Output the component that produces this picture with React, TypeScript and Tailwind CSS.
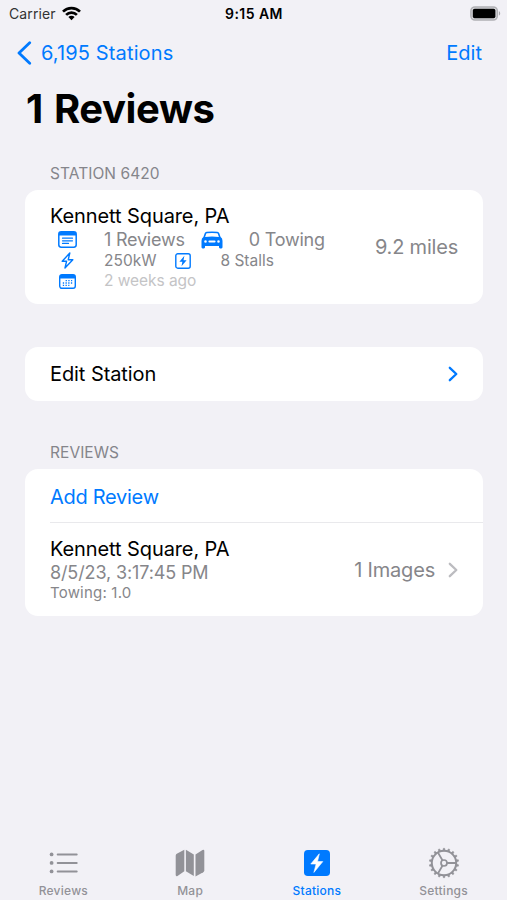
import React from 'react';

type IconProps = { className?: string };

const WifiIcon = () => (
  <svg width="19" height="15" viewBox="0 0 19 15" fill="none" stroke="#000" strokeWidth="2.7">
    <path d="M1 5.6a12.2 12.2 0 0 1 17 0" />
    <path d="M4.1 8.9a7.7 7.7 0 0 1 10.8 0" />
    <path d="M9.5 14.2 6.4 11.1a4.4 4.4 0 0 1 6.2 0Z" fill="#000" stroke="none" />
  </svg>
);

const BatteryIcon = () => (
  <svg width="31" height="15" viewBox="0 0 31 15">
    <rect x="0.9" y="0.9" width="26.4" height="13.2" rx="4" fill="#d8d8dc" stroke="#b0b0b4" strokeWidth="1.5" />
    <rect x="2.8" y="2.8" width="22.6" height="9.4" rx="1.8" fill="#000" />
    <path d="M28.9 5.2c1.7.6 1.7 3.8 0 4.4Z" fill="#a9a9ad" />
  </svg>
);

const Chevron = ({ className }: IconProps) => (
  <svg className={className} width="10" height="16" viewBox="0 0 10 16" fill="none" stroke="currentColor" strokeWidth="2.3" strokeLinecap="round" strokeLinejoin="round">
    <path d="M1.8 1.8 8.3 8l-6.5 6.2" />
  </svg>
);

const NoteIcon = () => (
  <svg width="19" height="17" viewBox="0 0 19 17" fill="none" stroke="currentColor">
    <rect x="0.8" y="0.8" width="17.4" height="15.4" rx="2.4" strokeWidth="1.5" />
    <path d="M1 3V2.6Q1 1 2.6 1h13.8Q18 1 18 2.6V4.6H1Z" fill="currentColor" stroke="none" />
    <path d="M4.5 7.2h10M4.5 9.8h10M4.5 12.4h6" strokeWidth="1.2" strokeLinecap="round" />
  </svg>
);

const CalendarIcon = () => (
  <svg width="17" height="15" viewBox="0 0 17 15" fill="none" stroke="currentColor">
    <rect x="0.7" y="0.7" width="15.6" height="13.6" rx="2.2" strokeWidth="1.4" />
    <path d="M1 4.4V2.2Q1 1 2.2 1h12.6Q16 1 16 2.2v2.2Z" fill="currentColor" stroke="none" />
    <path d="M6.6 6.6h6.6M3.8 9h9.4M3.8 11.4h6.6" strokeWidth="1.3" strokeDasharray="1.3 1.4" />
  </svg>
);

const BoltIcon = () => (
  <svg width="13" height="17" viewBox="0 0 13 17" fill="none" stroke="currentColor" strokeWidth="1.4" strokeLinejoin="round">
    <path d="M8.8 1 1.2 9.2h4.4L4 16l7.8-8.2H7.2Z" />
  </svg>
);

const BoltSquareIcon = () => (
  <svg width="16" height="16" viewBox="0 0 16 16" fill="none">
    <rect x="0.8" y="0.8" width="14.4" height="14.4" rx="2" stroke="currentColor" strokeWidth="1.4" />
    <path d="M9.4 2.8 4.4 8.7h3L6.5 13.2l5.1-5.9H8.5Z" fill="currentColor" />
  </svg>
);

const CarIcon = () => (
  <svg width="22" height="18" viewBox="0 0 22 18" fill="currentColor">
    <path
      fillRule="evenodd"
      d="M5.6.8Q11 .1 16.4.8q1.4.2 1.9 1.5l1.3 3.8q1.9 1.2 1.9 3.7v6.5q0 1.1-1.1 1.1h-1.3q-1.1 0-1.1-1.1v-1.4H4v1.4q0 1.1-1.1 1.1H1.6Q.5 17.4.5 16.3V9.8q0-2.5 1.9-3.7l1.3-3.8Q4.2 1 5.6.8ZM5.9 2.2q-.6.1-.8.7L4.1 5.9q6.9-.7 13.8 0l-1-3q-.2-.6-.8-.7-5.1-.6-10.2 0ZM4.5 9.2a1.3 1.3 0 1 0 0 2.6a1.3 1.3 0 1 0 0-2.6ZM17.5 9.2a1.3 1.3 0 1 0 0 2.6a1.3 1.3 0 1 0 0-2.6ZM8.4 9.5q-1 0-1 1t1 1h5.2q1 0 1-1t-1-1Z"
    />
  </svg>
);

const ListIcon = () => (
  <svg width="30" height="22" viewBox="0 0 30 22" stroke="currentColor" strokeLinecap="round" fill="currentColor">
    <path d="M9.7 2.4h19M9.7 10.9h19M9.7 19.4h19" strokeWidth="2" />
    <g stroke="none">
      <circle cx="3.6" cy="2.4" r="1.9" />
      <circle cx="3.6" cy="10.9" r="1.9" />
      <circle cx="3.6" cy="19.4" r="1.9" />
    </g>
  </svg>
);

const MapIcon = () => (
  <svg width="30" height="28" viewBox="0 0 30 28" fill="currentColor">
    <path d="M9.3.7V22.2L2.5 26.9Q.7 27.8.7 25.8V6.7Q.7 5.4 1.8 4.7Z" />
    <path d="m10.9.7 7.9 4.7v21.7l-7.9-4.9Z" />
    <path d="M20.5 5.5 27.5.9Q29.3.1 29.3 2v19.2q0 1.3-1.1 2l-7.7 4.4Z" />
  </svg>
);

const StationIcon = () => (
  <svg width="28" height="28" viewBox="0 0 28 28">
    <rect x="1" y="1" width="26" height="26" rx="3.8" fill="currentColor" />
    <path d="M16.3 4.8 7.8 15h5.3l-2.2 8.4 8.9-10.8h-5.3Z" fill="#fff" stroke="#fff" strokeWidth=".6" strokeLinejoin="round" />
  </svg>
);

const GearIcon = () => (
  <svg width="32" height="32" viewBox="0 0 32 32" fill="none" stroke="currentColor">
    <circle cx="16" cy="16" r="12.2" strokeWidth="2" />
    {[...Array(18)].map((_, i) => (
      <path key={i} d="M14.9 3.8l.4-2.5h1.4l.4 2.5Z" fill="currentColor" strokeWidth=".5" transform={`rotate(${i * 20} 16 16)`} />
    ))}
    <circle cx="16" cy="16" r="3" strokeWidth="1.7" />
    <path d="M19 16h9M14.5 13.4 10 5.6M14.5 18.6 10 26.4" strokeWidth="1.9" />
  </svg>
);

const Label = ({ icon, children }: { icon: React.ReactNode; children: React.ReactNode }) => (
  <div className="flex items-center gap-5">
    <span className="flex w-[34px] justify-center text-[#007aff]">{icon}</span>
    <span>{children}</span>
  </div>
);

const SectionHeader = ({ children }: { children: React.ReactNode }) => (
  <h2 className="px-[25px] text-[15.5px] leading-5 tracking-[0.05px] text-[#85858b]">{children}</h2>
);

const tabs = [
  { name: 'Reviews', icon: <ListIcon /> },
  { name: 'Map', icon: <MapIcon /> },
  { name: 'Stations', icon: <StationIcon /> },
  { name: 'Settings', icon: <GearIcon /> },
];

const App = () => {
  const active = 'Stations';

  return (
    <div className="flex h-[900px] w-[507px] flex-col overflow-hidden whitespace-nowrap bg-[#f2f1f6] font-['Inter',sans-serif] text-black">
      {/* Status bar */}
      <div className="grid h-[27px] grid-cols-3 items-center pl-[9px] pr-[6px]">
        <div className="flex items-center gap-[6px] text-[14px] tracking-[0.1px] text-[#333]">
          Carrier
          <WifiIcon />
        </div>
        <div className="pr-[2px] text-center text-[14px] font-semibold tracking-[0.45px]">9:15 AM</div>
        <div className="flex justify-end">
          <BatteryIcon />
        </div>
      </div>

      {/* Navigation */}
      <nav className="flex h-[51px] items-center justify-between pl-[17px] pr-[25px] text-[20px] text-[#007aff]">
        <a className="flex items-center gap-[9px] tracking-[0.13px]">
          <svg width="15" height="24" viewBox="0 0 15 24" fill="none" stroke="currentColor" strokeWidth="2.8" strokeLinecap="round" strokeLinejoin="round">
            <path d="M12.7 1.7 2 12l10.7 10.3" />
          </svg>
          6,195 Stations
        </a>
        <a>Edit</a>
      </nav>
      <h1 className="pl-[26px] text-[40px] font-bold leading-[62px] tracking-[-0.4px] [word-spacing:2px]">1 Reviews</h1>

      <main className="flex-1 pl-[25px] pr-6 pt-[24px]">
        <SectionHeader>STATION 6420</SectionHeader>
        <section className="mt-[6px] flex h-[114px] items-center justify-between rounded-[13px] bg-white px-[25px] text-[#86868a]">
          <div>
            <div className="text-[20px] leading-[26px] tracking-[-0.1px] text-black">Kennett Square, PA</div>
            <div className="flex h-[21px] items-center gap-[10px] text-[18px] tracking-[-0.22px]">
              <Label icon={<NoteIcon />}>1 Reviews</Label>
              <Label icon={<CarIcon />}>0 Towing</Label>
            </div>
            <div className="flex h-[21px] items-center gap-[10px] text-[15.5px]">
              <Label icon={<BoltIcon />}>250kW</Label>
              <Label icon={<BoltSquareIcon />}>8 Stalls</Label>
            </div>
            <div className="flex h-5 items-center text-[15.5px] tracking-[-0.05px] text-[#c4c4c6]">
              <Label icon={<CalendarIcon />}>2 weeks ago</Label>
            </div>
          </div>
          <div className="text-[20px] tracking-[-0.2px]">9.2 miles</div>
        </section>

        <section className="mt-[43px] flex h-[54px] items-center justify-between rounded-[13px] bg-white px-[25px]">
          <span className="text-[20px] tracking-[-0.08px]">Edit Station</span>
          <Chevron className="text-[#007aff]" />
        </section>

        <div className="mt-[42px]">
          <SectionHeader>REVIEWS</SectionHeader>
        </div>
        <section className="mt-[6px] rounded-[13px] bg-white pl-[25px]">
          <div className="flex h-[54px] items-center border-b border-[#e9e9ec] pt-[2px] text-[20px] tracking-[-0.28px] text-[#007aff]">
            Add Review
          </div>
          <div className="flex h-[93px] items-center justify-between pr-[25px] text-[#86868a]">
            <div>
              <div className="text-[20px] leading-[25px] tracking-[-0.1px] text-black">Kennett Square, PA</div>
              <div className="text-[18px] leading-[22px] tracking-[-0.13px]">8/5/23, 3:17:45 PM</div>
              <div className="text-[15px] leading-[18px] tracking-[0.2px]">Towing: 1.0</div>
            </div>
            <div className="flex items-center gap-[13px] text-[20px] tracking-[-0.2px]">
              1 Images
              <Chevron className="text-[#bcbcc0]" />
            </div>
          </div>
        </section>
      </main>

      {/* Tab bar */}
      <footer className="grid h-[60px] grid-cols-4">
        {tabs.map((tab) => (
          <div key={tab.name} className={`flex flex-col items-center ${tab.name === active ? 'text-[#007aff]' : 'text-[#929298]'}`}>
            <div className="flex h-[46px] items-center">{tab.icon}</div>
            <span className="-mt-[2px] text-[12px] font-medium leading-[14px] tracking-[0.25px]">{tab.name}</span>
          </div>
        ))}
      </footer>
    </div>
  );
};

export default App;
